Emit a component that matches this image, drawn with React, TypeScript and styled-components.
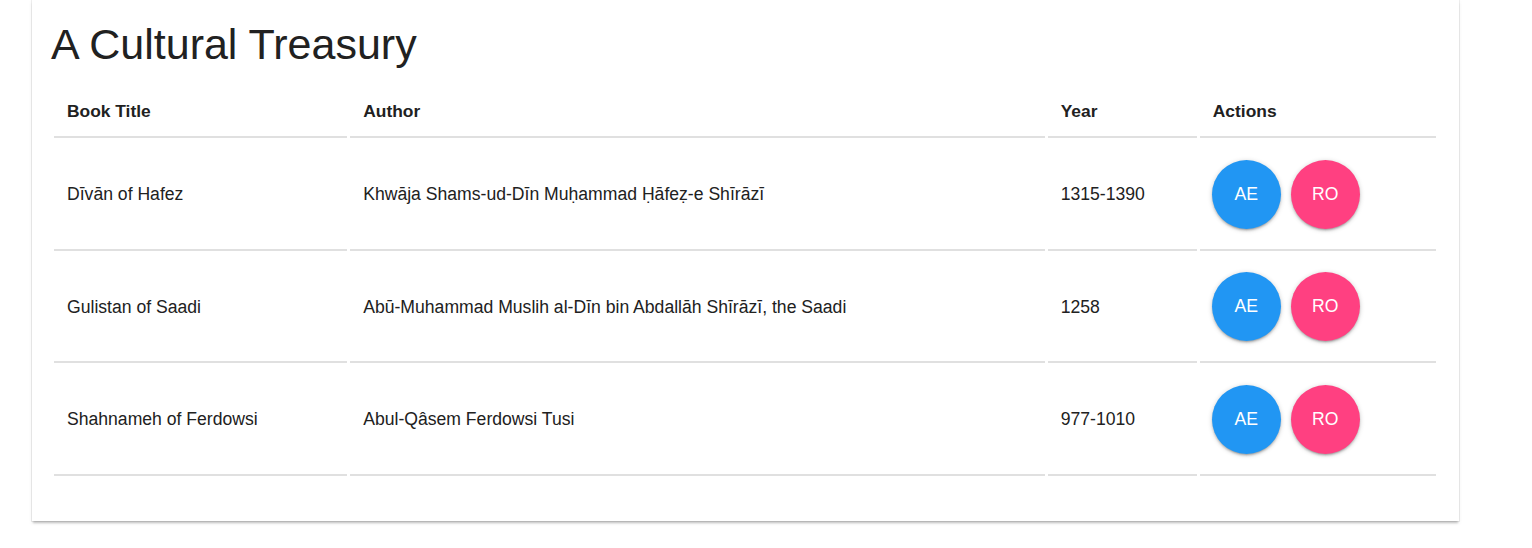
import React from 'react';
import styled, { createGlobalStyle } from 'styled-components';

type Book = {
  title: string;
  author: string;
  year: string;
}

type ActionProps = {
  tone: 'blue' | 'pink';
}

const books: Book[] = [
  { title: 'Dīvān of Hafez', author: 'Khwāja Shams-ud-Dīn Muḥammad Ḥāfeẓ-e Shīrāzī', year: '1315-1390' },
  { title: 'Gulistan of Saadi', author: 'Abū-Muhammad Muslih al-Dīn bin Abdallāh Shīrāzī, the Saadi', year: '1258' },
  { title: 'Shahnameh of Ferdowsi', author: 'Abul-Qâsem Ferdowsi Tusi', year: '977-1010' },
];

const GlobalStyle = createGlobalStyle`
  html, body {
    margin: 0;
    padding: 0;
    background: #fff;
  }

  body {
    font-family: "Liberation Sans", Arial, sans-serif;
    color: rgba(0, 0, 0, 0.87);
  }

  #root {
    padding-bottom: 20px;
  }
`;

const Card = styled.div`
  box-sizing: border-box;
  width: 1427px;
  margin-left: 32px;
  padding: 20px 20px 45px 19px;
  background: #fff;
  box-shadow: 0 0 0 1px rgba(0, 0, 0, 0.06), 0 3px 2px -1px rgba(0, 0, 0, 0.2), 0 2px 4px 0 rgba(0, 0, 0, 0.08);
`;

const Title = styled.h1`
  margin: 0 0 18px;
  font-size: 43px;
  line-height: 48px;
  font-weight: 400;
  color: #212121;
`;

const Table = styled.table`
  width: 100%;
  table-layout: fixed;
  border-collapse: separate;
  border-spacing: 3px 0;
`;

const HeadCell = styled.th<{ w: number }>`
  box-sizing: border-box;
  width: ${ (props) => props.w }px;
  padding: 15px 12px 15px 13px;
  text-align: left;
  font-size: 17.4px;
  line-height: 20px;
  font-weight: 700;
  color: #212121;
  border-bottom: 2px solid #e0e0e0;
`;

const Cell = styled.td`
  box-sizing: border-box;
  height: 112.5px;
  padding: 2px 12px 0 13px;
  font-size: 17.6px;
  line-height: 20px;
  color: #212121;
  vertical-align: middle;
  border-bottom: 2px solid #e0e0e0;
`;

const Actions = styled.div`
  display: flex;
  gap: 10px;
  align-items: center;
  margin-left: -1px;
`;

const ActionButton = styled.button<ActionProps>`
  width: 69px;
  height: 69px;
  border: none;
  border-radius: 50%;
  padding: 0;
  background: ${ (props) => props.tone === 'blue' ? '#2196f3' : '#ff4081' };
  color: #fff;
  font-family: "Liberation Sans", Arial, sans-serif;
  font-size: 17.6px;
  cursor: pointer;
  box-shadow: 0 2px 2px 0 rgba(0, 0, 0, 0.14), 0 3px 1px -2px rgba(0, 0, 0, 0.12), 0 1px 5px 0 rgba(0, 0, 0, 0.2);
`;

const App = () => (
  <>
    <GlobalStyle />
    <Card>
      <Title>A Cultural Treasury</Title>
      <Table>
        <thead>
          <tr>
            <HeadCell w={ 293 }>Book Title</HeadCell>
            <HeadCell w={ 694 }>Author</HeadCell>
            <HeadCell w={ 149 }>Year</HeadCell>
            <HeadCell w={ 236 }>Actions</HeadCell>
          </tr>
        </thead>
        <tbody>
          { books.map((book) => (
            <tr key={ book.title }>
              <Cell>{ book.title }</Cell>
              <Cell>{ book.author }</Cell>
              <Cell>{ book.year }</Cell>
              <Cell>
                <Actions>
                  <ActionButton tone="blue">AE</ActionButton>
                  <ActionButton tone="pink">RO</ActionButton>
                </Actions>
              </Cell>
            </tr>
          )) }
        </tbody>
      </Table>
    </Card>
  </>
);

export default App;
